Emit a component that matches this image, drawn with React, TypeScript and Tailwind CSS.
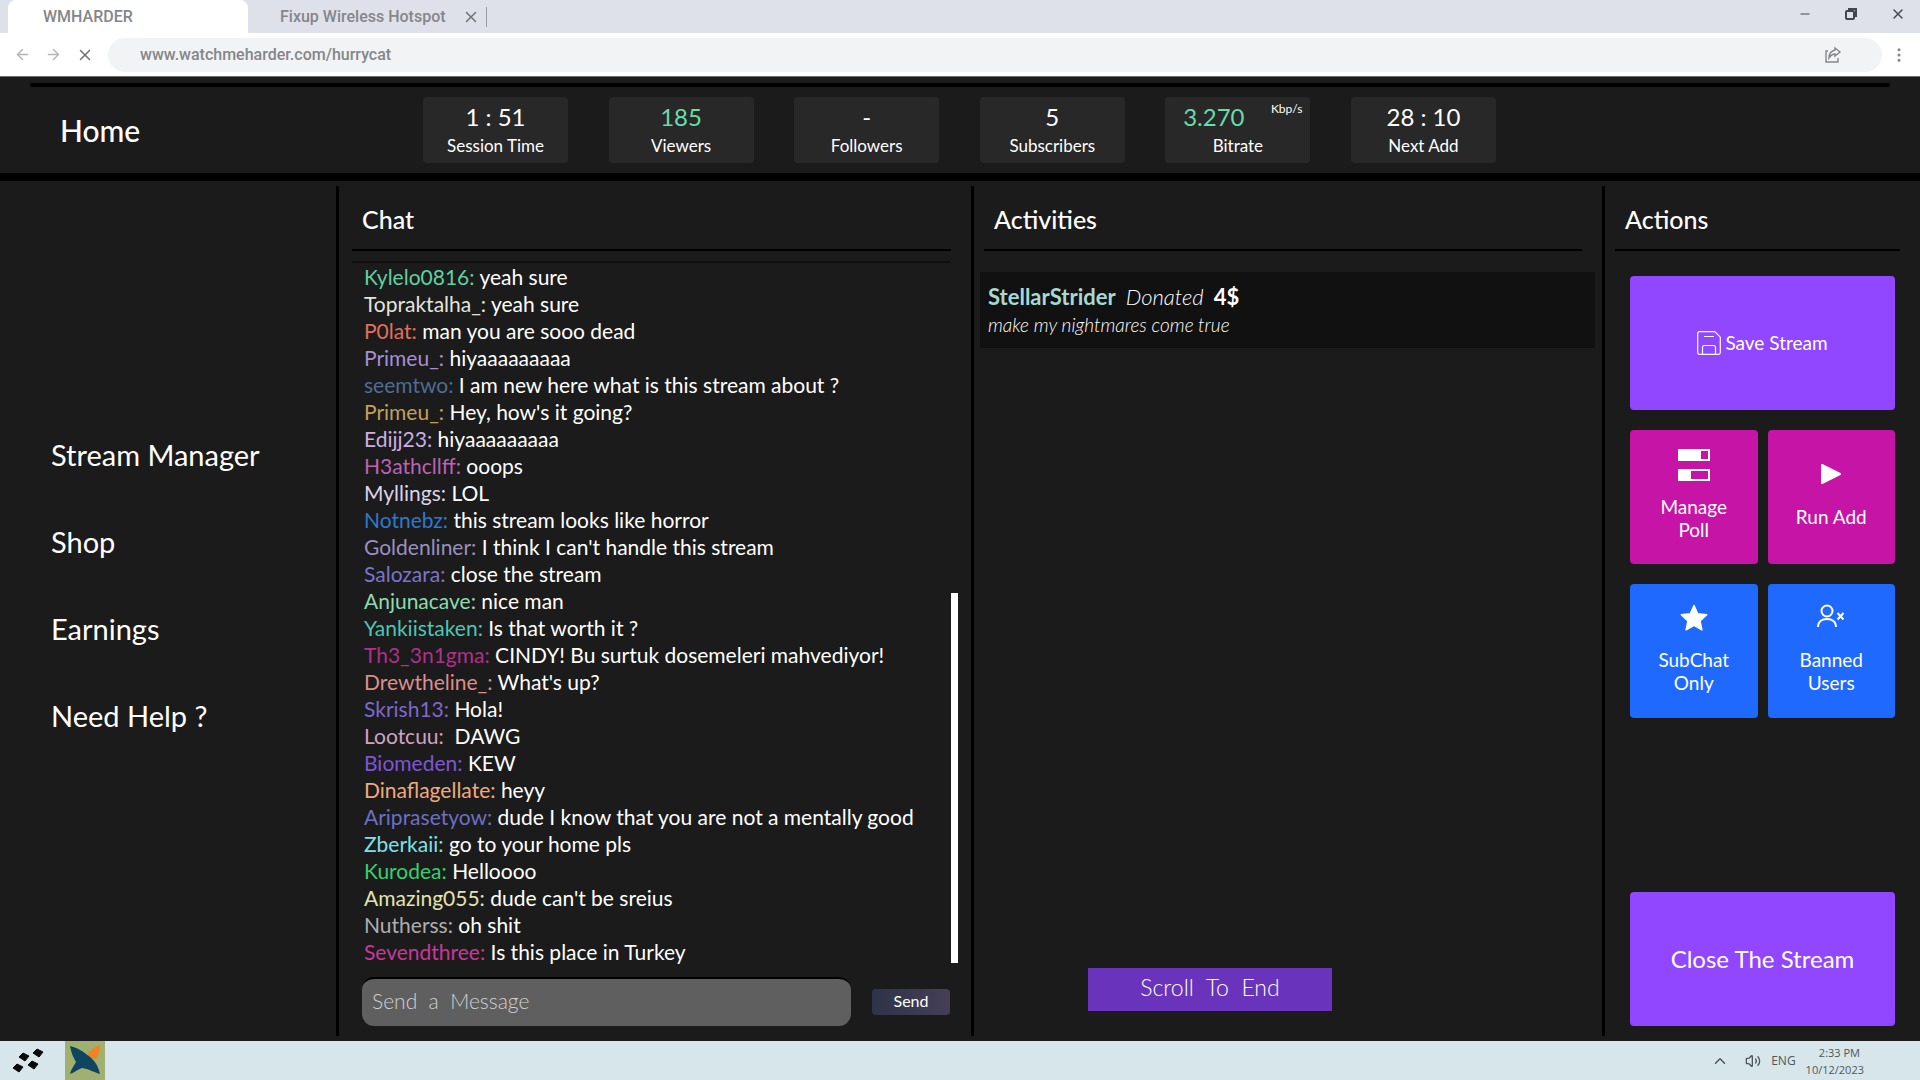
import { ReactNode } from "react"
import { ChevronUp, Minus, MoreVertical, Volume2, X, ArrowLeft, ArrowRight } from "lucide-react"

type Message = {
    name: string
    color: string
    text: string
}

type Stat = {
    label: string
    value: string
    green?: boolean
    unit?: string
}

const stats: Stat[] = [
    { label: "Session Time", value: "1 : 51" },
    { label: "Viewers", value: "185", green: true },
    { label: "Followers", value: "-" },
    { label: "Subscribers", value: "5" },
    { label: "Bitrate", value: "3.270", green: true, unit: "Kbp/s" },
    { label: "Next Add", value: "28 : 10" },
]

const menu = ["Stream Manager", "Shop", "Earnings", "Need Help ?"]

const messages: Message[] = [
    { name: "Kylelo0816", color: "text-[#5fd0a5]", text: "yeah sure" },
    { name: "Topraktalha_", color: "text-[#e4e4dc]", text: "yeah sure" },
    { name: "P0lat", color: "text-[#e0705c]", text: "man you are sooo dead" },
    { name: "Primeu_", color: "text-[#a58fd6]", text: "hiyaaaaaaaaa" },
    { name: "seemtwo", color: "text-[#4f6c94]", text: "I am new here what is this stream about ?" },
    { name: "Primeu_", color: "text-[#c0a05c]", text: "Hey, how's it going?" },
    { name: "Edijj23", color: "text-[#cfaee0]", text: "hiyaaaaaaaaa" },
    { name: "H3athcllff", color: "text-[#bd62b4]", text: "ooops" },
    { name: "Myllings", color: "text-[#dcd4ea]", text: "LOL" },
    { name: "Notnebz", color: "text-[#2f78d0]", text: "this stream looks like horror" },
    { name: "Goldenliner", color: "text-[#9a90c0]", text: "I think I can't handle this stream" },
    { name: "Salozara", color: "text-[#7a74cc]", text: "close the stream" },
    { name: "Anjunacave", color: "text-[#8bdcb0]", text: "nice man" },
    { name: "Yankiistaken", color: "text-[#4fc4b4]", text: "Is that worth it ?" },
    { name: "Th3_3n1gma", color: "text-[#b0308e]", text: "CINDY! Bu surtuk dosemeleri mahvediyor!" },
    { name: "Drewtheline_", color: "text-[#dc8e8e]", text: "What's up?" },
    { name: "Skrish13", color: "text-[#7c68d0]", text: "Hola!" },
    { name: "Lootcuu", color: "text-[#cfa4c0]", text: " DAWG" },
    { name: "Biomeden", color: "text-[#7f55d8]", text: "KEW" },
    { name: "Dinaflagellate", color: "text-[#eeaa80]", text: "heyy" },
    { name: "Ariprasetyow", color: "text-[#6c70c4]", text: "dude I know that you are not a mentally good" },
    { name: "Zberkaii", color: "text-[#7fe0ec]", text: "go to your home pls" },
    { name: "Kurodea", color: "text-[#35d070]", text: "Helloooo" },
    { name: "Amazing055", color: "text-[#e2e4b0]", text: "dude can't be sreius" },
    { name: "Nutherss", color: "text-[#b0aeb0]", text: "oh shit" },
    { name: "Sevendthree", color: "text-[#c8389c]", text: "Is this place in Turkey" },
]

const Browser = () => {
    return (
        <div className="bg-white font-['Roboto'] text-[#85868a]">
            <div className="flex h-[33px] bg-[#dee1e9]">
                <div className="ml-2 flex w-60 items-center rounded-t-lg bg-white pl-[35px] text-base font-medium">WMHARDER</div>
                <div className="flex items-center rounded-bl-lg pl-8 text-base font-medium">
                    Fixup Wireless Hotspot
                    <button aria-label="Close tab" className="ml-4 text-[#707276]"><X size={18} /></button>
                    <span className="ml-1.5 h-5 w-px bg-[#9a9ba0]" />
                </div>
                <div className="ml-auto flex h-7 items-center gap-8 pr-3.5 text-[#44464c]">
                    <button aria-label="Minimize"><Minus size={14} /></button>
                    <button aria-label="Restore">
                        <svg width="14" height="14" viewBox="0 0 14 14" fill="none" stroke="currentColor" strokeWidth="2">
                            <rect x="2" y="4" width="8" height="8" rx="1" />
                            <path d="M4 2h8v8" />
                        </svg>
                    </button>
                    <button aria-label="Close window"><X size={16} /></button>
                </div>
            </div>
            <div className="flex h-11 items-center border-b border-[#6d706e]">
                <div className="flex w-[108px] items-center gap-3.5 pl-3.5 text-[#b4b5b8]">
                    <button aria-label="Back"><ArrowLeft size={17} /></button>
                    <button aria-label="Forward"><ArrowRight size={17} /></button>
                    <button aria-label="Stop" className="text-[#707276]"><X size={18} /></button>
                </div>
                <div className="flex h-[34px] flex-1 items-center rounded-full bg-[#f1f3f4] pr-10 pl-8">
                    <input aria-label="Address" className="min-w-0 flex-1 text-base font-medium outline-none" defaultValue="www.watchmeharder.com/hurrycat" />
                    <button aria-label="Share">
                        <svg width="18" height="18" viewBox="0 0 18 18" fill="none" stroke="currentColor" strokeWidth="1.4">
                            <path d="M4 5H2v11h12v-4" />
                            <path d="M11 2l5 4-5 4V8c-3 0-4 1-6 4 0-4 2-7 6-8z" />
                        </svg>
                    </button>
                </div>
                <button aria-label="Menu" className="w-[38px] pl-2"><MoreVertical size={18} /></button>
            </div>
        </div>
    )
}

const StatBox = ({ stat }: { stat: Stat }) => {
    return (
        <div className="relative flex h-[66px] w-[145px] flex-col items-center rounded bg-[#282828] pt-1">
            <div className={stat.green ? "text-2xl leading-8 text-[#68dcab]" : "text-2xl leading-8"}>
                <span className={stat.unit ? "mr-12" : ""}>{stat.value}</span>
            </div>
            {stat.unit && <span className="absolute top-0.5 right-2 text-xs leading-5">{stat.unit}</span>}
            <div className="text-[17px] leading-[26px]">{stat.label}</div>
        </div>
    )
}

const Header = () => {
    return (
        <header className="border-b-8 border-black pt-1.5">
            <div className="mx-[30px] h-1 rounded-full bg-black" />
            <div className="flex h-[86px] items-center pl-[60px]">
                <h1 className="w-[363px] text-3xl font-medium">Home</h1>
                <div className="flex w-[1073px] justify-between">
                    {stats.map((stat) => <StatBox key={stat.label} stat={stat} />)}
                </div>
            </div>
        </header>
    )
}

const Title = ({ children }: { children: ReactNode }) => {
    return (
        <h2 className="mr-5 ml-2.5 h-[65px] border-b-2 border-black pl-2.5 text-[25px] leading-[66px] font-medium">{children}</h2>
    )
}

const Chat = () => {
    return (
        <section className="flex flex-col border-l-3 border-black pl-[3px]">
            <Title>Chat</Title>
            <div className="mt-2.5 flex flex-1 pr-[13px]">
                <ul className="ml-2.5 flex-1 border-t-2 border-[#111] pl-3 text-[21px] leading-[27px] whitespace-pre">
                    {messages.map((m, i) => (
                        <li key={i}><span className={m.color}>{m.name}:</span> {m.text}</li>
                    ))}
                </ul>
                <div className="mb-1 h-[370px] w-[7px] self-end bg-white" />
            </div>
            <form className="mt-2.5 mb-2.5 flex items-center pr-[21px] pl-5" onSubmit={(e) => e.preventDefault()}>
                <input
                    aria-label="Message"
                    placeholder="Send  a  Message"
                    className="h-[49px] min-w-0 flex-1 rounded-xl border-t-2 border-black bg-[#5f5f5f] px-2.5 pb-1 text-[21px] font-light outline-none placeholder:text-[#d0d0d0]"
                />
                <button className="ml-[21px] h-[26px] w-[78px] rounded-sm bg-linear-to-r from-[#2e3448] to-[#453f56] pb-0.5 text-base leading-6">Send</button>
            </form>
        </section>
    )
}

const Activities = () => {
    return (
        <section className="flex flex-col border-l-3 border-black">
            <Title>Activities</Title>
            <div className="mt-[21px] mr-[7px] ml-1.5 h-[76px] bg-[#111] px-2 pt-[11px] leading-7">
                <p className="flex gap-2.5 text-[22px]">
                    <b className="text-[#a8d8cf]">StellarStrider</b>
                    <i className="font-light">Donated</i>
                    <b>4$</b>
                </p>
                <p className="text-[19px] font-light italic">make my nightmares come true</p>
            </div>
            <button className="mt-auto mb-[25px] ml-[114px] h-[43px] w-[244px] bg-[#6a33bb] pb-1 text-[23px] font-light whitespace-pre">Scroll  To  End</button>
        </section>
    )
}

type ActionProps = {
    icon: ReactNode
    color: string
    children: ReactNode
}
const Action = ({ icon, color, children }: ActionProps) => {
    return (
        <button className={`flex h-[134px] flex-col items-center justify-center rounded px-4 pb-1 text-[19px] leading-[23px] ${color}`}>
            {icon}
            {children}
        </button>
    )
}

const Actions = () => {
    return (
        <section className="flex flex-col border-l-3 border-black">
            <Title>Actions</Title>
            <div className="mt-[25px] mr-[25px] mb-2.5 ml-[25px] flex flex-1 flex-col">
                <div className="grid grid-cols-2 gap-x-2.5 gap-y-5">
                    <button className="col-span-2 flex h-[134px] items-center justify-center gap-1 rounded bg-[#9147ff] text-[19px]">
                        <svg width="24" height="24" viewBox="0 0 24 24" fill="none" stroke="currentColor" strokeWidth="1.2">
                            <path d="M2.5.7h15.3l5.5 5.5v15.3a1.8 1.8 0 0 1-1.8 1.8h-19A1.8 1.8 0 0 1 .7 21.5v-19A1.8 1.8 0 0 1 2.5.7z" />
                            <path d="M7 5.5h10M5.5 23v-6.5a2 2 0 0 1 2-2h9a2 2 0 0 1 2 2V23" />
                        </svg>
                        Save Stream
                    </button>
                    <Action
                        color="bg-[#c614a6]"
                        icon={
                            <svg className="mb-3.5" width="32" height="32" viewBox="0 0 32 32" fill="none" stroke="white" strokeWidth="2">
                                <path d="M1 1h30v10H1zM1 21h30v10H1z" />
                                <path d="M0 0h23v12H0zM0 20h13v12H0z" fill="white" stroke="none" />
                            </svg>
                        }
                    >
                        Manage<br />Poll
                    </Action>
                    <Action
                        color="bg-[#c614a6]"
                        icon={
                            <svg className="mb-5" width="20" height="22" viewBox="0 0 20 22" fill="white" stroke="white" strokeWidth="2" strokeLinejoin="round">
                                <path d="M1 2l18 9-18 9z" />
                            </svg>
                        }
                    >
                        Run Add
                    </Action>
                    <Action
                        color="bg-[#1f69ff]"
                        icon={
                            <svg className="mb-4" width="28" height="28" viewBox="0 0 28 28" fill="white" stroke="white" strokeWidth="1.5" strokeLinejoin="round">
                                <path d="M14 1.5l3.7 8.3 9 1-6.7 6.1 1.9 9-7.9-4.6-7.9 4.6 1.9-9-6.7-6.1 9-1z" />
                            </svg>
                        }
                    >
                        SubChat<br />Only
                    </Action>
                    <Action
                        color="bg-[#1f69ff]"
                        icon={
                            <svg className="mb-5" width="28" height="24" viewBox="0 0 28 24" fill="none" stroke="white" strokeWidth="2">
                                <circle cx="10" cy="7" r="5.5" />
                                <path d="M1 23c0-5.5 4-8 9-8s9 2.5 9 8M20.5 9l6 6.5M26.5 9l-6 6.5" />
                            </svg>
                        }
                    >
                        Banned<br />Users
                    </Action>
                </div>
                <button className="mt-auto h-[134px] rounded bg-[#9147ff] text-2xl">Close The Stream</button>
            </div>
        </section>
    )
}

const Taskbar = () => {
    return (
        <footer className="flex h-[39px] items-center bg-[#d6e6ea] font-['Open_Sans'] text-[#50565c]">
            <button aria-label="Start" className="ml-3">
                <svg width="32" height="28" viewBox="0 0 32 28" fill="#0a0a0a" stroke="#0a0a0a">
                    <path d="M1 21l4-4 6 3-4 5zM7 10l4-4 6 3-4 5zM16 18l4-4 6 3-4 5zM21 6l4-4 6 3-4 5z" />
                </svg>
            </button>
            <button aria-label="App" className="ml-[21px] flex h-full w-10 items-center justify-center bg-[#a0b070]">
                <svg width="34" height="34" viewBox="0 0 34 34">
                    <path d="M19 11C22 6 27 3 32 1c0 5-1 9-4 14-3-1-6-2-9-4z" fill="#f58220" />
                    <path d="M2 2c7 2 11 4 16 8 8 5 12 11 14 20-7-2-11-5-18-6-4 1-8 5-12 6 1-5 4-8 6-12C5 13 3 8 2 2z" fill="#0f4560" />
                </svg>
            </button>
            <div className="ml-auto flex items-center pr-14">
                <ChevronUp size={18} />
                <Volume2 size={16} className="ml-4" />
                <span className="ml-2.5 text-xs">ENG</span>
                <div className="ml-2.5 text-right text-[11px] leading-[17px]">
                    <div className="pr-1">2:33 PM</div>
                    <div>10/12/2023</div>
                </div>
            </div>
        </footer>
    )
}

const App = () => {
    return (
        <div className="flex min-h-screen flex-col bg-[#1b1b1b] font-['Lato',sans-serif] text-white">
            <Browser />
            <Header />
            <main className="grid flex-1 grid-cols-[336fr_635fr_631fr_318fr] py-[5px]">
                <nav className="flex flex-col gap-[51px] pt-[251px] pl-[51px] text-[29px] leading-9">
                    {menu.map((item) => <a key={item} href="#">{item}</a>)}
                </nav>
                <Chat />
                <Activities />
                <Actions />
            </main>
            <Taskbar />
        </div>
    )
}

export default App
